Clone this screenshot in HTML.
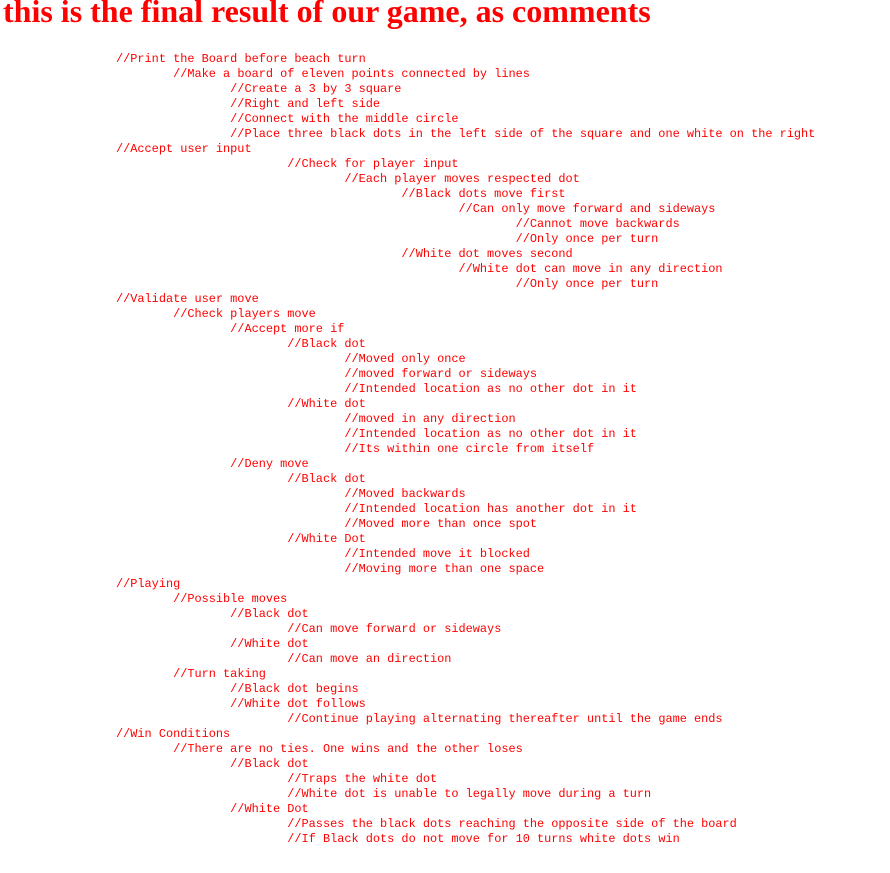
<!DOCTYPE html>
<html><head><meta charset="utf-8"><style>
body{margin:0;background:#fff;width:890px;height:873px;overflow:hidden;}
h1{position:absolute;left:3px;top:-7px;margin:0;font:bold 32px "Liberation Serif",serif;color:#f00;white-space:nowrap;}
pre{position:absolute;left:116px;top:50px;margin:0;padding-top:1px;font:11.9px/15px "Liberation Mono",monospace;color:#f00;tab-size:8;}
</style></head><body>
<h1>this is the final result of our game, as comments</h1>
<pre style="top:51px">//Print the Board before beach turn
	//Make a board of eleven points connected by lines
		//Create a 3 by 3 square
		//Right and left side
		//Connect with the middle circle
		//Place three black dots in the left side of the square and one white on the right
//Accept user input
			//Check for player input
				//Each player moves respected dot
					//Black dots move first
						//Can only move forward and sideways
							//Cannot move backwards
							//Only once per turn
					//White dot moves second
						//White dot can move in any direction
							//Only once per turn
//Validate user move
	//Check players move
		//Accept more if
			//Black dot
				//Moved only once
				//moved forward or sideways
				//Intended location as no other dot in it
			//White dot
				//moved in any direction
				//Intended location as no other dot in it
				//Its within one circle from itself
		//Deny move
			//Black dot
				//Moved backwards
				//Intended location has another dot in it
				//Moved more than once spot
			//White Dot
				//Intended move it blocked
				//Moving more than one space
//Playing
	//Possible moves
		//Black dot
			//Can move forward or sideways
		//White dot
			//Can move an direction
	//Turn taking
		//Black dot begins
		//White dot follows
			//Continue playing alternating thereafter until the game ends
//Win Conditions
	//There are no ties. One wins and the other loses
		//Black dot
			//Traps the white dot
			//White dot is unable to legally move during a turn
		//White Dot
			//Passes the black dots reaching the opposite side of the board
			//If Black dots do not move for 10 turns white dots win
</pre>
</body></html>
